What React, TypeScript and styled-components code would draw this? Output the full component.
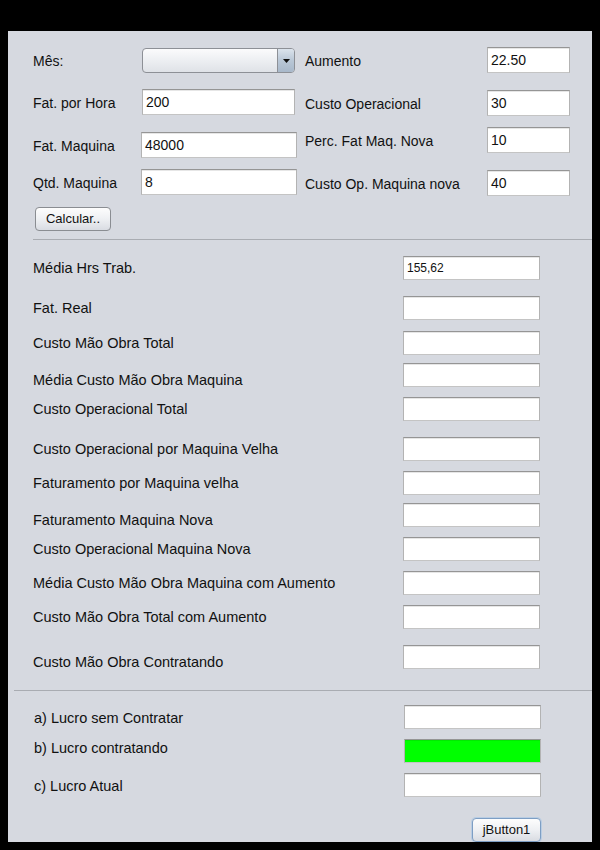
import * as React from "react";
import styled, { createGlobalStyle } from "styled-components";

const GlobalStyle = createGlobalStyle`
  html, body {
    margin: 0;
    padding: 0;
    background: #000;
  }
  body {
    font-family: "Liberation Sans", Arial, sans-serif;
    color: #111;
  }
`;

const Panel = styled.div`
  margin: 31px 8px 0 8px;
  height: 811px;
  overflow: hidden;
  background: #d6d9e0;
  display: flex;
  flex-direction: column;
`;

const TopGrid = styled.div`
  display: flex;
  padding-left: 25px;
`;

const Column = styled.div<{ $width?: number }>`
  display: flex;
  flex-direction: column;
  width: ${(p) => (p.$width ? `${p.$width}px` : "auto")};
`;

const Row = styled.div<{ $gap: number; $height: number; $pad?: number }>`
  display: flex;
  align-items: flex-start;
  height: ${(p) => p.$height}px;
  margin-top: ${(p) => p.$gap}px;
  padding-left: ${(p) => p.$pad ?? 0}px;
`;

const Label = styled.div<{ $width: number; $height: number; $shift?: number; $size?: number }>`
  width: ${(p) => p.$width}px;
  flex-shrink: 0;
  font-size: ${(p) => p.$size ?? 14}px;
  line-height: ${(p) => p.$height}px;
  margin-top: ${(p) => p.$shift ?? 0}px;
  white-space: nowrap;
`;

const Field = styled.div<{ $width: number; $height: number; $fill?: string; $small?: boolean }>`
  box-sizing: border-box;
  width: ${(p) => p.$width}px;
  height: ${(p) => p.$height}px;
  background: ${(p) => p.$fill ?? "#fff"};
  border: 1px solid;
  border-color: #959595 #b3b3b3 #c4c4c4 #b3b3b3;
  box-shadow: inset 0 1px 0 ${(p) => (p.$fill ? "rgba(0,0,0,0.08)" : "#e6e6e6")};
  padding: 0 3px;
  font-size: ${(p) => (p.$small ? 12 : 14)}px;
  line-height: ${(p) => p.$height - 1}px;
  white-space: nowrap;
  overflow: hidden;
`;

const Combo = styled.div<{ $width: number }>`
  box-sizing: border-box;
  width: ${(p) => p.$width}px;
  height: 25px;
  border: 1px solid #8d9096;
  border-radius: 4px;
  background: linear-gradient(#fbfbfc, #eef0f3 45%, #dfe2e7);
  display: flex;
  justify-content: flex-end;
  overflow: hidden;
`;

const ComboArrow = styled.div`
  width: 16px;
  border-left: 1px solid #8d9096;
  background: linear-gradient(#dbe3ec, #b9c7d6 50%, #a8b8ca);
  display: flex;
  align-items: center;
  justify-content: center;
`;

const Button = styled.div<{ $focused?: boolean; $width: number }>`
  box-sizing: border-box;
  width: ${(p) => p.$width}px;
  height: 24px;
  border: 1px solid ${(p) => (p.$focused ? "#7d9ec4" : "#8a8d92")};
  box-shadow: ${(p) => (p.$focused ? "0 0 0 1px #b9cde3" : "none")};
  border-radius: 4px;
  background: linear-gradient(#fdfdfd, #eef0f3 50%, #d9dce2);
  font-size: 13px;
  line-height: 22px;
  text-align: center;
  white-space: nowrap;
`;

const ButtonRow = styled.div<{ $gap: number; $pad: number }>`
  display: flex;
  margin-top: ${(p) => p.$gap}px;
  padding-left: ${(p) => p.$pad}px;
`;

const Separator = styled.div<{ $gap: number; $indent: number }>`
  height: 1px;
  background: #a9acb2;
  margin-top: ${(p) => p.$gap}px;
  margin-left: ${(p) => p.$indent}px;
`;

type Item = { label: string; gap: number; value?: string; shift?: number; fill?: string; small?: boolean };

const leftTop: Item[] = [
  { label: "Fat. por Hora", gap: 16, value: "200" },
  { label: "Fat. Maquina", gap: 17, value: "48000" },
  { label: "Qtd. Maquina", gap: 11, value: "8" },
];

const rightTop: Item[] = [
  { label: "Aumento", gap: 16, value: "22.50" },
  { label: "Custo Operacional", gap: 17, value: "30" },
  { label: "Perc. Fat Maq. Nova", gap: 11, value: "10" },
  { label: "Custo Op. Maquina nova", gap: 17, value: "40" },
];

const results: Item[] = [
  { label: "Média Hrs Trab.", gap: 16, value: "155,62", small: true },
  { label: "Fat. Real", gap: 16 },
  { label: "Custo Mão Obra Total", gap: 11 },
  { label: "Média Custo Mão Obra Maquina", gap: 8, shift: 5 },
  { label: "Custo Operacional Total", gap: 10 },
  { label: "Custo Operacional por Maquina Velha", gap: 16 },
  { label: "Faturamento por Maquina velha", gap: 10 },
  { label: "Faturamento Maquina Nova", gap: 8, shift: 5 },
  { label: "Custo Operacional Maquina Nova", gap: 10 },
  { label: "Média Custo Mão Obra Maquina com Aumento", gap: 10 },
  { label: "Custo Mão Obra Total com Aumento", gap: 10 },
  { label: "Custo Mão Obra Contratando", gap: 16, shift: 5 },
];

const profits: Item[] = [
  { label: "a) Lucro sem Contratar", gap: 15, shift: 1 },
  { label: "b) Lucro contratando", gap: 10, shift: -3, fill: "#00ff00" },
  { label: "c) Lucro Atual", gap: 10, shift: 1 },
];

function Arrow() {
  return (
    <svg width="7" height="4" viewBox="0 0 7 4">
      <path d="M0 0h7L3.5 4z" fill="#111" />
    </svg>
  );
}

export default function App() {
  return (
    <>
      <GlobalStyle />
      <Panel>
        <TopGrid>
          <Column $width={272}>
            <Row $gap={17} $height={25}>
              <Label $width={109} $height={25} $shift={1}>Mês:</Label>
              <Combo $width={153}>
                <ComboArrow>
                  <Arrow />
                </ComboArrow>
              </Combo>
            </Row>
            {leftTop.map((it, i) => (
              <Row key={it.label} $gap={it.gap} $height={26}>
                <Label $width={i === 0 ? 109 : 108} $height={26} $shift={1}>{it.label}</Label>
                <Field $width={i === 0 ? 153 : 156} $height={26}>{it.value}</Field>
              </Row>
            ))}
          </Column>
          <Column>
            {rightTop.map((it) => (
              <Row key={it.label} $gap={it.gap} $height={26}>
                <Label $width={182} $height={26} $shift={1}>{it.label}</Label>
                <Field $width={83} $height={26}>{it.value}</Field>
              </Row>
            ))}
          </Column>
        </TopGrid>
        <ButtonRow $gap={11} $pad={27}>
          <Button $width={76}>Calcular..</Button>
        </ButtonRow>
        <Separator $gap={8} $indent={25} />
        {results.map((it) => (
          <Row key={it.label} $gap={it.gap} $height={24} $pad={25}>
            <Label $width={370} $height={24} $shift={it.shift} $size={14.5}>{it.label}</Label>
            <Field $width={137} $height={24} $small={it.small}>{it.value}</Field>
          </Row>
        ))}
        <Separator $gap={21} $indent={6} />
        {profits.map((it) => (
          <Row key={it.label} $gap={it.gap} $height={24} $pad={26}>
            <Label $width={370} $height={24} $shift={it.shift} $size={14.5}>{it.label}</Label>
            <Field $width={137} $height={24} $fill={it.fill}>{it.value}</Field>
          </Row>
        ))}
        <ButtonRow $gap={21} $pad={464}>
          <Button $focused $width={69}>jButton1</Button>
        </ButtonRow>
      </Panel>
    </>
  );
}
